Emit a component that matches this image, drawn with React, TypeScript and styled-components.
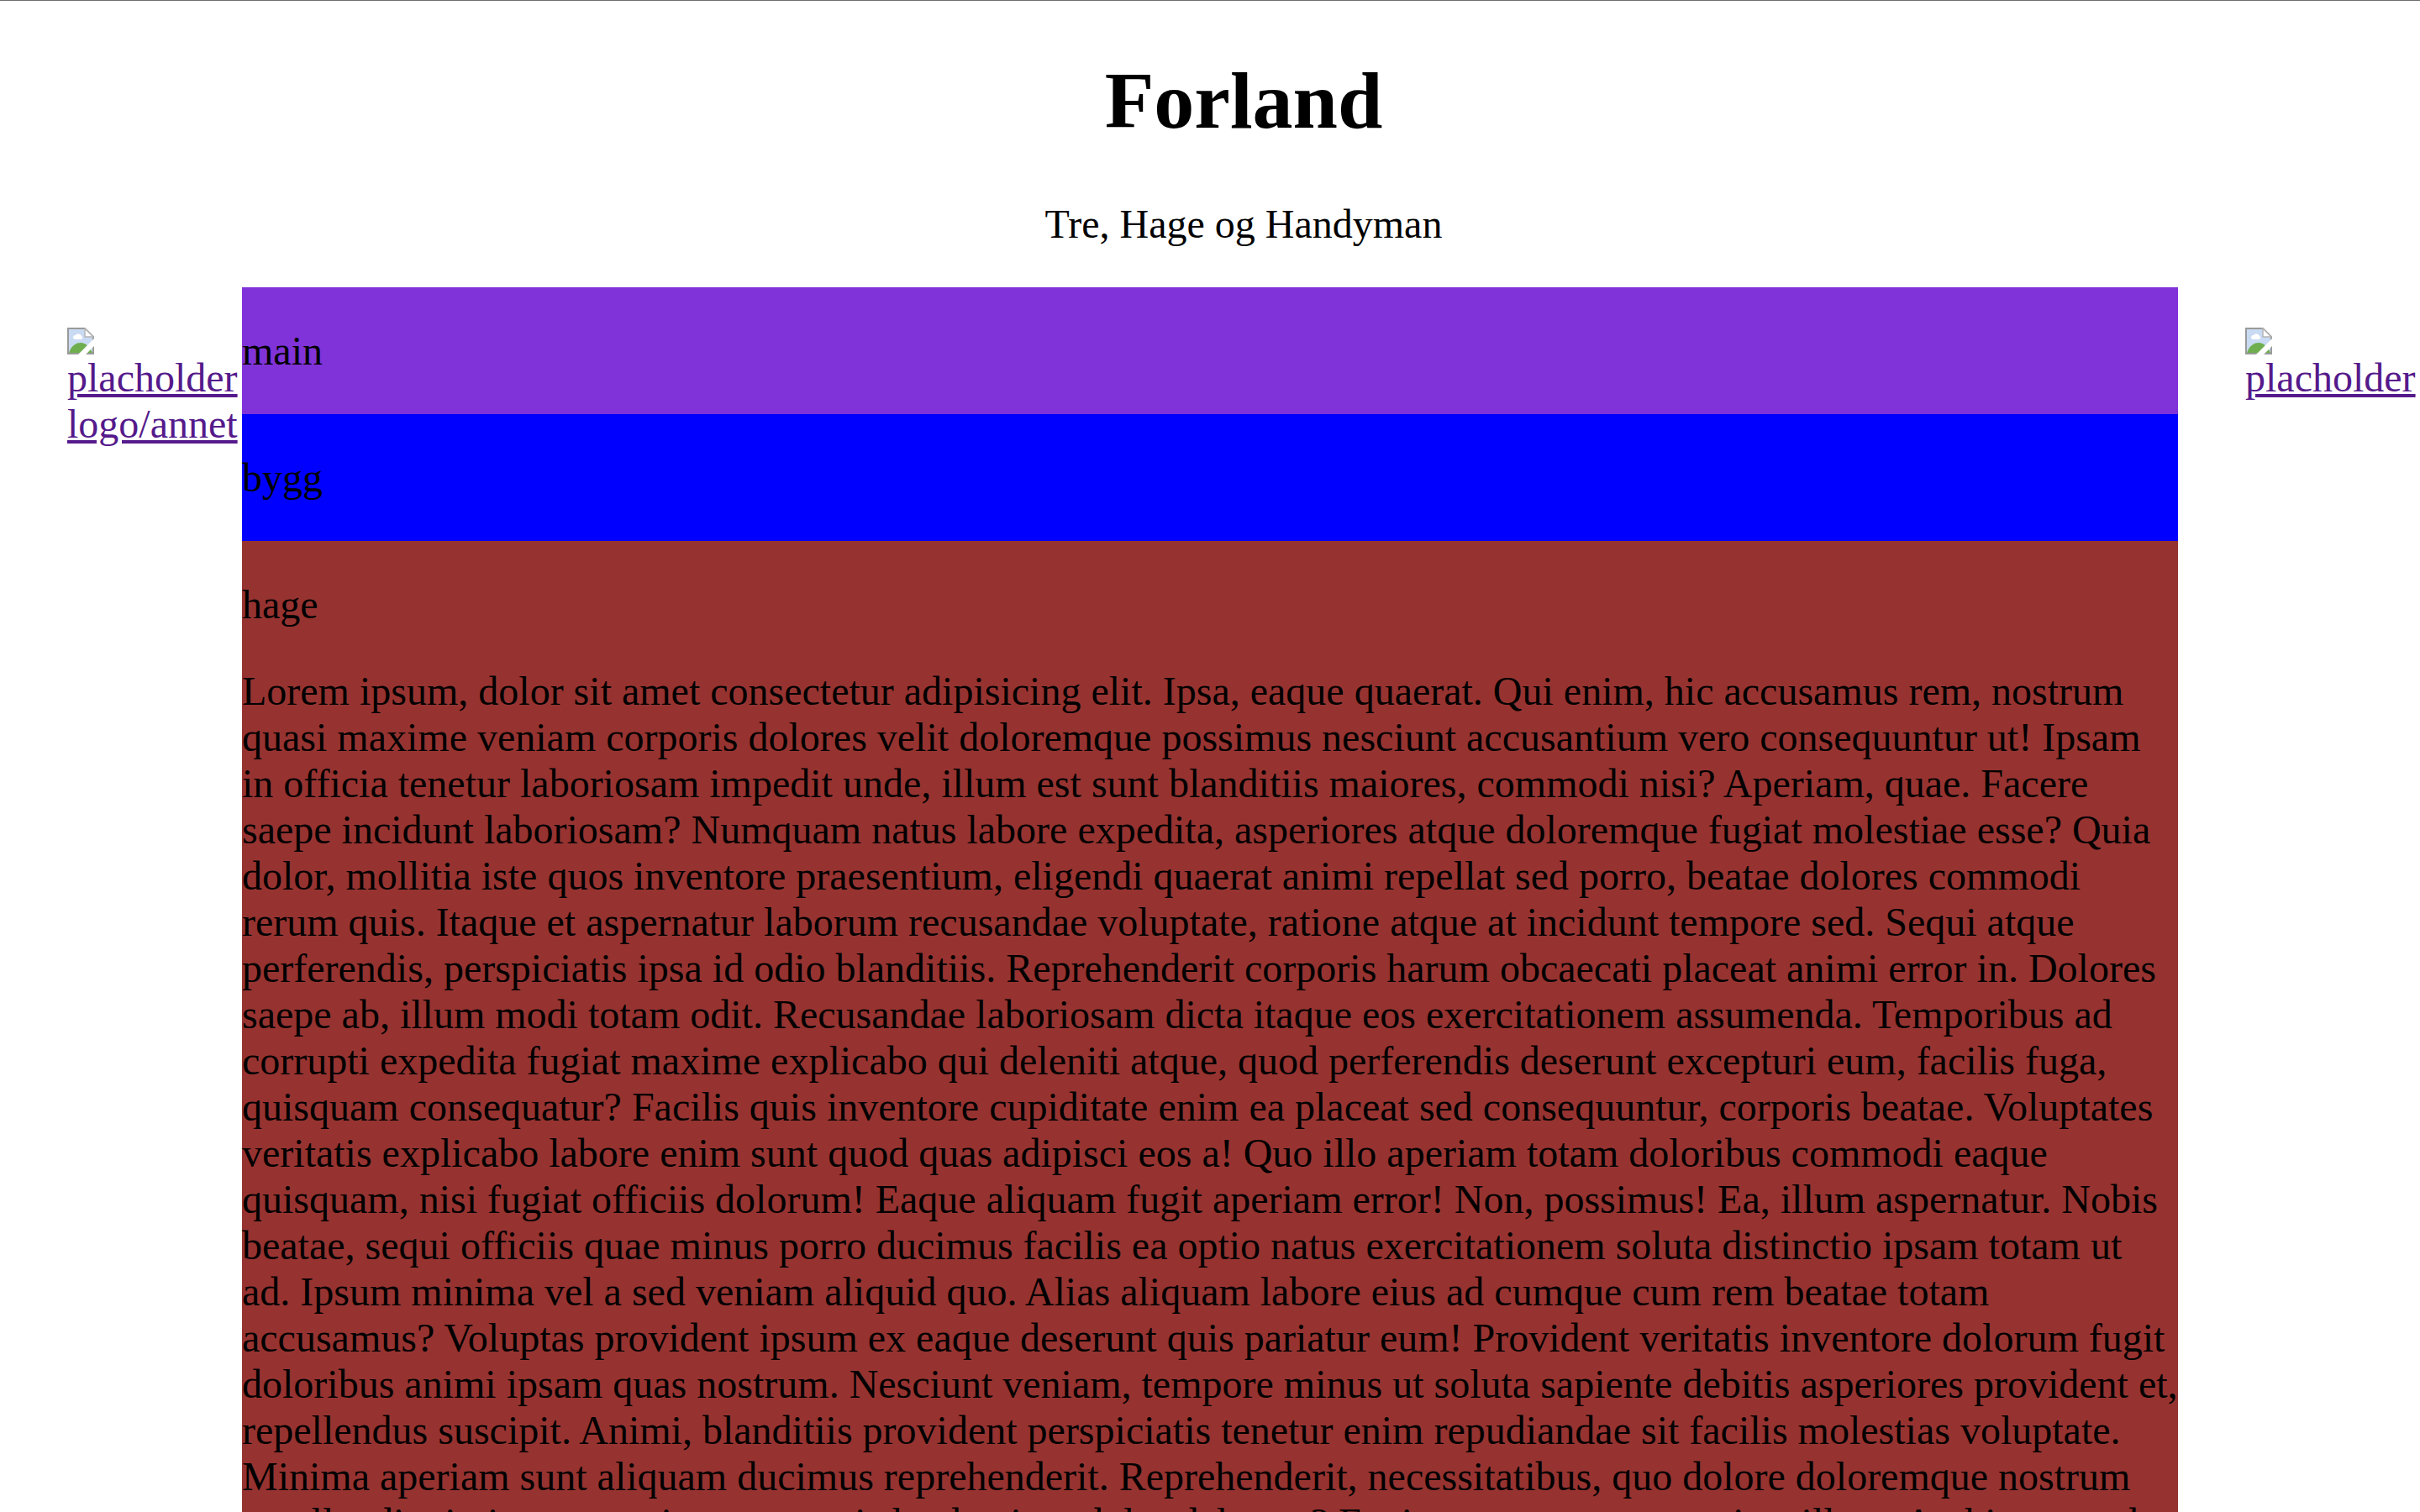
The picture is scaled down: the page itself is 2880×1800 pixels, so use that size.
// App.tsx

import React from "react";
import styled, { createGlobalStyle } from "styled-components";

const GlobalStyle = createGlobalStyle`
  html {
    overflow: hidden;
  }

  body {
    margin: 0;
    border-top: 1px solid #6e6e6e;
    background: #fff;
    color: #000;
    font-family: "Liberation Serif", "Times New Roman", serif;
    font-size: 48px;
  }
`;

const Header = styled.header`
  padding-left: 80px;
  text-align: center;
`;

const Title = styled.h1`
  margin: 64px 0;
  font-size: 96px;
  line-height: 110px;
  font-weight: bold;
`;

const Tagline = styled.p`
  margin: 48px 0;
`;

const Layout = styled.div`
  display: grid;
  grid-template-columns: 288px 2304px 288px;
`;

const SideList = styled.ul`
  margin: 48px 0;
  padding: 0 0 0 80px;
  list-style: none;
`;

const SideLink = styled.a`
  color: #551a8b;
  text-decoration: underline;
`;

const BrokenIcon = styled.svg`
  display: block;
  width: 32px;
  height: 32px;
`;

const Main = styled.main`
  min-width: 0;
`;

const Section = styled.section<{ $bg: string }>`
  display: flow-root;
  background: ${(p) => p.$bg};
`;

const Text = styled.p`
  margin: 48px 0;
`;

const BrokenImage = () => (
  <BrokenIcon viewBox="0 0 32 32" aria-hidden="true">
    <path d="M1 1H21L31 11V31H1Z" fill="#c9daf3" stroke="#9a9a9a" strokeWidth="2" />
    <path d="M21 1V11H31Z" fill="#fff" stroke="#b5b5b5" strokeWidth="1.5" />
    <path d="M7 12a3 3 0 0 1 3-3a4 4 0 0 1 7 1a2.5 2.5 0 0 1 0 4H9a2.5 2.5 0 0 1-2-2Z" fill="#fff" />
    <path d="M2 30C5 21 11 18 16 18C22 18 27 23 30 30Z" fill="#6fae4e" />
    <path d="M13 32L32 13V22L22 32Z" fill="#fff" />
  </BrokenIcon>
);

const lorem =
  "Lorem ipsum, dolor sit amet consectetur adipisicing elit. Ipsa, eaque quaerat. Qui enim, hic accusamus rem, nostrum quasi maxime veniam corporis dolores velit doloremque possimus nesciunt accusantium vero consequuntur ut! Ipsam in officia tenetur laboriosam impedit unde, illum est sunt blanditiis maiores, commodi nisi? Aperiam, quae. Facere saepe incidunt laboriosam? Numquam natus labore expedita, asperiores atque doloremque fugiat molestiae esse? Quia dolor, mollitia iste quos inventore praesentium, eligendi quaerat animi repellat sed porro, beatae dolores commodi rerum quis. Itaque et aspernatur laborum recusandae voluptate, ratione atque at incidunt tempore sed. Sequi atque perferendis, perspiciatis ipsa id odio blanditiis. Reprehenderit corporis harum obcaecati placeat animi error in. Dolores saepe ab, illum modi totam odit. Recusandae laboriosam dicta itaque eos exercitationem assumenda. Temporibus ad corrupti expedita fugiat maxime explicabo qui deleniti atque, quod perferendis deserunt excepturi eum, facilis fuga, quisquam consequatur? Facilis quis inventore cupiditate enim ea placeat sed consequuntur, corporis beatae. Voluptates veritatis explicabo labore enim sunt quod quas adipisci eos a! Quo illo aperiam totam doloribus commodi eaque quisquam, nisi fugiat officiis dolorum! Eaque aliquam fugit aperiam error! Non, possimus! Ea, illum aspernatur. Nobis beatae, sequi officiis quae minus porro ducimus facilis ea optio natus exercitationem soluta distinctio ipsam totam ut ad. Ipsum minima vel a sed veniam aliquid quo. Alias aliquam labore eius ad cumque cum rem beatae totam accusamus? Voluptas provident ipsum ex eaque deserunt quis pariatur eum! Provident veritatis inventore dolorum fugit doloribus animi ipsam quas nostrum. Nesciunt veniam, tempore minus ut soluta sapiente debitis asperiores provident et, repellendus suscipit. Animi, blanditiis provident perspiciatis tenetur enim repudiandae sit facilis molestias voluptate. Minima aperiam sunt aliquam ducimus reprehenderit. Reprehenderit, necessitatibus, quo dolore doloremque nostrum repellat dignissimos asperiores corporis laudantium dolor delectus? Fugit nemo eum quam vitae illum. Architecto sed quod laboriosam.";

export default function App() {
  return (
    <>
      <GlobalStyle />
      <Header>
        <Title>Forland</Title>
        <Tagline>Tre, Hage og Handyman</Tagline>
      </Header>
      <Layout>
        <aside>
          <SideList>
            <li>
              <SideLink href="#">
                <BrokenImage />
                placholder logo/annet
              </SideLink>
            </li>
          </SideList>
        </aside>
        <Main>
          <Section $bg="#7f33d9">
            <Text>main</Text>
          </Section>
          <Section $bg="#0000ff">
            <Text>bygg</Text>
          </Section>
          <Section $bg="#963330">
            <Text>hage</Text>
            <Text>{lorem}</Text>
          </Section>
        </Main>
        <aside>
          <SideList>
            <li>
              <SideLink href="#">
                <BrokenImage />
                placholder
              </SideLink>
            </li>
          </SideList>
        </aside>
      </Layout>
    </>
  );
}
